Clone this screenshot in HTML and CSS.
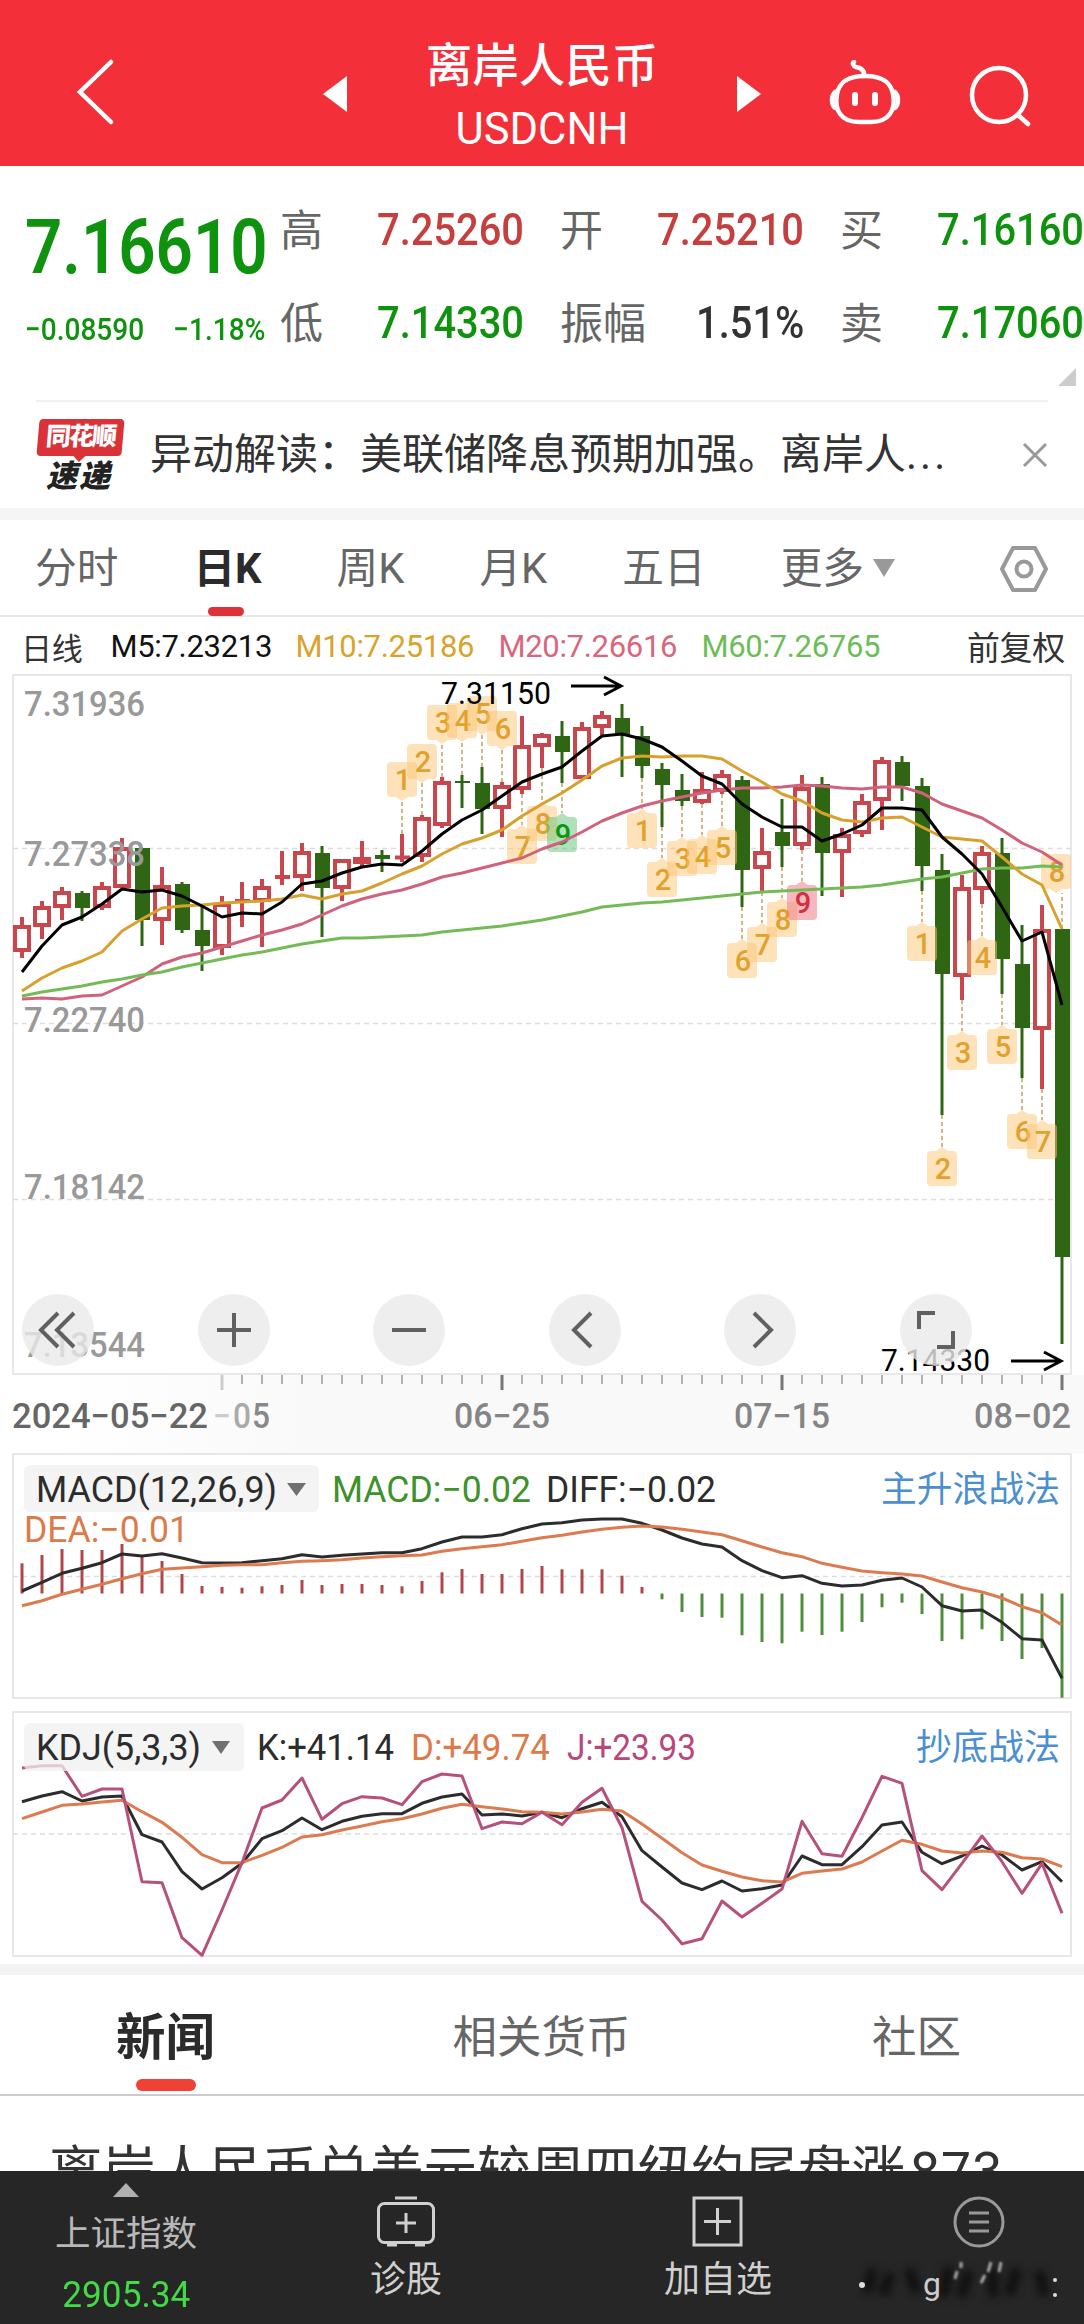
FILE: index.html
```html
<!DOCTYPE html>
<html lang="zh-CN">
<head>
  <meta charset="UTF-8">
  <meta name="viewport" content="width=device-width, initial-scale=1">
  <title>离岸人民币 USDCNH</title>
  <link rel="stylesheet" href="styles.css">
</head>
<body>
  <header class="topbar">
    <svg class="icon-back" width="44" height="70" viewBox="0 0 44 70"><path d="M38 5 L7 35 L38 65"/></svg>
    <svg class="icon-prev" width="24" height="36" viewBox="0 0 24 36"><path d="M24 0 V36 L0 18 Z"/></svg>
    <div class="title">
      <h1>离岸人民币</h1>
      <div class="symbol">USDCNH</div>
    </div>
    <svg class="icon-next" width="24" height="36" viewBox="0 0 24 36"><path d="M0 0 V36 L24 18 Z"/></svg>
    <svg class="icon-robot" width="72" height="66" viewBox="0 0 72 66">
      <path d="M36 16 C56 16 62 24 64 34 C67 50 60 62 42 62 H30 C12 62 5 50 8 34 C10 24 16 16 36 16 Z"/>
      <path d="M35 16 C36 10 32 8 27 7 C24 6 23 3 25 2"/>
      <path d="M6 32 C2 36 2 44 6 48 M66 32 C70 36 70 44 66 48"/>
      <path class="eyes" d="M26 35 V43 M46 35 V43"/>
    </svg>
    <svg class="icon-search" width="64" height="64" viewBox="0 0 64 64"><circle cx="31" cy="31" r="27"/><path d="M50 51 L60 60"/></svg>
  </header>

  <section class="quote">
    <div class="price">
      <div class="last"><span>7.16610</span></div>
      <div class="change"><span>−0.08590</span><span>−1.18%</span></div>
    </div>
    <dl class="stats">
      <div><dt>高</dt><dd class="up">7.25260</dd></div>
      <div><dt>开</dt><dd class="up">7.25210</dd></div>
      <div><dt>买</dt><dd class="down">7.16160</dd></div>
      <div><dt>低</dt><dd class="down">7.14330</dd></div>
      <div><dt>振幅</dt><dd>1.51%</dd></div>
      <div><dt>卖</dt><dd class="down">7.17060</dd></div>
    </dl>
    <i class="corner"></i>
  </section>

  <section class="notice">
    <div class="brand"><b>同花顺</b><em>速递</em></div>
    <p>异动解读：美联储降息预期加强。离岸人<span>...</span></p>
    <svg width="26" height="26" viewBox="0 0 26 26"><path d="M2 2 L24 24 M24 2 L2 24"/></svg>
  </section>

  <nav class="periods">
    <a>分时</a>
    <a class="active">日K</a>
    <a>周K</a>
    <a>月K</a>
    <a>五日</a>
    <a class="more">更多</a>
    <svg width="50" height="48" viewBox="0 0 50 48"><path d="M14 3 H36 L47 24 L36 45 H14 L3 24 Z"/><circle cx="25" cy="24" r="7.5"/></svg>
  </nav>

  <div class="legend">
    <span class="cn">日线</span>
    <span class="m5">M5:7.23213</span>
    <span class="m10">M10:7.25186</span>
    <span class="m20">M20:7.26616</span>
    <span class="m60">M60:7.26765</span>
    <span class="cn adjust">前复权</span>
  </div>

  <div class="chart">
    <svg id="chart" width="1084" height="1290" viewBox="0 674 1084 1290"></svg>
    <div class="tools">
      <button><svg viewBox="0 0 72 72"><path d="M36 19 L19 36 L36 53 M52 19 L35 36 L52 53"/></svg></button>
      <button><svg viewBox="0 0 72 72"><path d="M19 36 H53 M36 19 V53"/></svg></button>
      <button><svg viewBox="0 0 72 72"><path d="M19 36 H53"/></svg></button>
      <button><svg viewBox="0 0 72 72"><path d="M42 19 L25 36 L42 53"/></svg></button>
      <button><svg viewBox="0 0 72 72"><path d="M30 19 L47 36 L30 53"/></svg></button>
      <button><svg viewBox="0 0 72 72"><path d="M19 35 V19 H35 M53 37 V53 H37"/></svg></button>
    </div>
  </div>

  <nav class="sections">
    <a class="active">新闻</a>
    <a>相关货币</a>
    <a>社区</a>
  </nav>
  <article class="news">离岸人民币兑美元较周四纽约尾盘涨<span>873</span></article>

  <footer class="bottombar">
    <div class="item index">
      <svg width="26" height="14" viewBox="0 0 26 14"><path d="M13 0 L26 14 H0 Z"/></svg>
      <span>上证指数</span>
      <strong>2905.34</strong>
    </div>
    <div class="item">
      <svg width="60" height="52" viewBox="0 0 60 52"><rect x="2.5" y="7.5" width="55" height="39" rx="6"/><path d="M19 2 H41 M30 17 V37 M20 27 H40 M11 49 H21 M39 49 H49"/></svg>
      <span>诊股</span>
    </div>
    <div class="item add">
      <svg width="52" height="52" viewBox="0 0 52 52"><rect x="2" y="2" width="47" height="47"/><path d="M25.500 12 V39 M12 25.500 H39"/></svg>
      <span>加自选</span>
    </div>
    <div class="item menu">
      <svg width="54" height="52" viewBox="0 0 54 52"><circle cx="27" cy="26" r="24"/><path d="M17 17 H37 M17 26 H37 M17 35 H37"/></svg>
      <svg class="smudge" width="204" height="54" viewBox="0 0 204 54">
        <path class="dark" d="M16 10 L10 34 M34 14 L26 36 M52 10 L60 34 M92 8 L86 38 M112 12 L104 38 M136 10 V38 M160 10 L152 36 M182 12 L188 36"/>
        <path class="light" d="M104 3 V9 M134 3 L131 13 M144 3 L142 13 M100 12 L98 20 M128 16 L124 24"/>
        <circle cx="5" cy="26" r="3"/><circle cx="198" cy="21" r="2"/><circle cx="198" cy="36" r="2"/>
        <text x="66" y="36">g</text>
      </svg>
    </div>
  </footer>

  <script src="chart.js"></script>
</body>
</html>
```
FILE: styles.css
```css
* {
  box-sizing: border-box;
}
body {
  margin: 0;
  width: 1084px;
  height: 2324px;
  overflow: hidden;
  background: #fff;
  color: #333;
  font-family: Roboto, "Noto Sans CJK SC", sans-serif;
}
svg {
  display: block;
  fill: none;
  flex: none;
}

/* top bar */
.topbar {
  display: flex;
  height: 166px;
  background: #f3303a;
  color: #fff;
}
.topbar svg {
  stroke: #fff;
  stroke-width: 4.500;
  stroke-linecap: round;
}
.icon-back {
  margin: 57px 0 0 73px;
}
.topbar .icon-prev,
.topbar .icon-next {
  margin: 76px 0 0 206px;
  fill: #fff;
  stroke: none;
}
.topbar .icon-next {
  margin-left: 0;
}
.title {
  width: 390px;
  padding-top: 38px;
  text-align: center;
}
.title h1 {
  margin: 0;
  font-size: 46.500px;
  font-weight: 500;
  line-height: 56px;
}
.symbol {
  font-size: 43.500px;
  line-height: 72px;
}
.icon-robot {
  margin: 60px 0 0 68px;
}
.topbar .eyes {
  stroke-width: 6;
}
.icon-search {
  margin: 64px 0 0 67px;
}

/* quote */
.quote {
  position: relative;
  display: flex;
  height: 234px;
}
.price {
  width: 280px;
  padding: 46px 0 0 25px;
  color: #0f930f;
}
.last {
  height: 70px;
  font-size: 76px;
  font-weight: 600;
  line-height: 70px;
}
.last span {
  display: inline-block;
  transform: scaleX(.86);
  transform-origin: left;
}
.change {
  display: flex;
  justify-content: space-between;
  width: 270px;
  margin-top: 28px;
  font-size: 31.500px;
  font-weight: 500;
  line-height: 40px;
  transform: scaleX(.89);
  transform-origin: left;
}
.stats {
  display: grid;
  grid-template-columns: 280px 280px 280px;
  grid-auto-rows: 93px;
  flex: none;
  margin: 14px 0 0;
}
.stats div {
  display: flex;
  align-items: center;
  justify-content: space-between;
  width: 244px;
}
.stats dt {
  color: #666;
  font-size: 43px;
}
.stats dd {
  margin: 0;
  padding-top: 6px;
  font-size: 45px;
  font-weight: 500;
  transform: scaleX(.885);
  transform-origin: right;
}
.stats .up {
  color: #c63f3f;
}
.stats .down {
  color: #0f930f;
}
.corner {
  position: absolute;
  right: 8px;
  bottom: 14px;
  border: 9px solid transparent;
  border-right-color: #ccc;
  border-bottom-color: #ccc;
}

/* notice */
.notice {
  display: flex;
  align-items: center;
  height: 108px;
  margin: 0 36px;
  border-top: 2px solid #f0f0f0;
}
.brand {
  width: 114px;
  flex: none;
  line-height: 1;
}
.brand b {
  position: relative;
  display: block;
  width: 85px;
  height: 37px;
  margin-left: 2px;
  border-radius: 4px;
  background: #d93239;
  color: #fff;
  font-size: 25px;
  font-weight: 900;
  line-height: 36px;
  text-align: center;
  letter-spacing: -2px;
  transform: skewX(-5deg);
}
.brand b::after {
  content: "";
  position: absolute;
  left: 36px;
  top: 36px;
  border: 7px solid transparent;
  border-top-color: #d93239;
}
.brand em {
  display: block;
  margin: 5px 0 0 10px;
  color: #222;
  font-size: 31px;
  font-weight: 900;
  letter-spacing: 2px;
}
.notice p {
  width: 874px;
  margin: 0;
  font-size: 42px;
  line-height: 60px;
  white-space: nowrap;
}
.notice p span {
  letter-spacing: 3px;
}
.notice svg {
  margin-left: 1px;
  stroke: #999;
  stroke-width: 3;
}

/* period tabs */
.periods {
  display: flex;
  align-items: center;
  gap: 75px;
  height: 109px;
  padding: 2px 35px 0;
  border-top: 12px solid #f5f5f5;
  border-bottom: 2px solid #e8e8e8;
  color: #666;
  font-size: 41.700px;
}
.periods a {
  position: relative;
  line-height: 60px;
}
.periods .active {
  color: #2b2b2b;
  font-weight: 700;
}
.periods .active::after {
  content: "";
  position: absolute;
  left: 15px;
  bottom: -17px;
  width: 36px;
  height: 9px;
  border-radius: 5px;
  background: #dd3338;
}
.periods .more::after {
  content: "";
  position: absolute;
  right: -31px;
  top: 20px;
  border: solid transparent;
  border-width: 18px 11px 0;
  border-top-color: #999;
}
.periods svg {
  margin-left: auto;
  stroke: #999;
  stroke-width: 4;
  stroke-linejoin: round;
}

/* moving average legend */
.legend {
  display: flex;
  align-items: center;
  height: 58px;
  margin-bottom: -1px;
  padding: 0 19px 0 21px;
  font-size: 31px;
  letter-spacing: -.3px;
  white-space: nowrap;
}
.legend .m5 {
  width: 185px;
  margin-left: 28px;
  color: #111;
}
.legend .m10 {
  width: 203px;
  color: #d9a32c;
}
.legend .m20 {
  width: 203px;
  color: #d9667d;
}
.legend .m60 {
  color: #6cbd58;
}
.legend .adjust {
  margin-left: auto;
  font-size: 33px;
}

/* chart */
.chart {
  position: relative;
  height: 1290px;
}
.chart text {
  stroke: none;
}
.frame {
  fill: none;
  stroke: #e8e8e8;
  stroke-width: 2;
}
.grid {
  stroke: #ddd;
  stroke-width: 1.5;
  stroke-dasharray: 5 4;
}
.tick {
  stroke: #999;
  stroke-width: 1.5;
}
.tick-main {
  stroke: #777;
  stroke-width: 3;
}
.tick-light {
  stroke: #ccc;
  stroke-width: 3;
}
.candle-up {
  stroke: #c9474c;
  stroke-width: 4;
  fill: none;
}
.candle-up rect {
  fill: #fff;
}
.candle-down {
  stroke: #2f6614;
  stroke-width: 3;
  fill: #2f6614;
}
.line {
  fill: none;
  stroke-width: 3;
  stroke-linejoin: round;
}
.badge path {
  fill: #fbc676;
  fill-opacity: .5;
}
.badge text {
  fill: #e2a02c;
  font-size: 29px;
  font-weight: 500;
  text-anchor: middle;
}
.badge line {
  stroke: #d0b88a;
  stroke-width: 2;
  stroke-dasharray: 4 3;
}
.badge-green path {
  fill: #62c476;
}
.badge-green text {
  fill: #0d970d;
}
.badge-red path {
  fill: #ef707d;
}
.badge-red text {
  fill: #d02f3e;
}
.arrow {
  fill: none;
  stroke: #000;
  stroke-width: 3;
}
.hist-up {
  stroke: #b0474b;
  stroke-width: 3;
}
.hist-down {
  stroke: #4f8c3c;
  stroke-width: 3;
}
.chip {
  fill: #f0f0f0;
  fill-opacity: .75;
}
.caret {
  fill: #707070;
}
.tools {
  position: absolute;
  left: 22px;
  top: 620px;
  display: flex;
  gap: 103.600px;
}
.tools button {
  width: 72px;
  height: 72px;
  padding: 0;
  border: 0;
  border-radius: 50%;
  background: rgba(234, 234, 234, .8);
}
.tools svg {
  stroke: #606060;
  stroke-width: 4;
}

/* news tabs */
.sections {
  display: flex;
  justify-content: space-between;
  align-items: center;
  height: 132px;
  padding: 0 123px 3px 116px;
  border-top: 11px solid #f4f4f4;
  border-bottom: 2px solid #ccc;
  color: #666;
  font-size: 44.500px;
}
.sections a:nth-child(2) {
  margin-right: 4px;
}
.sections .active {
  position: relative;
  color: #2b2b2b;
  font-size: 49.500px;
  font-weight: 700;
}
.sections .active::after {
  content: "";
  position: absolute;
  left: 20px;
  bottom: -22px;
  width: 60px;
  height: 12px;
  border-radius: 6px;
  background: #ef4136;
}
.news {
  height: 75px;
  padding: 38px 0 0 49px;
  overflow: hidden;
  font-size: 53.500px;
  line-height: 76px;
  white-space: nowrap;
}
.news span {
  margin-left: 5px;
  letter-spacing: 1px;
}

/* bottom bar */
.bottombar {
  display: flex;
  height: 153px;
  background: #262626;
  color: #d0d0d0;
  font-size: 36px;
}
.item {
  position: relative;
  display: flex;
  flex-direction: column;
  align-items: center;
  width: 156px;
  padding-top: 25px;
  margin-left: 76px;
}
.item svg {
  stroke: #d0d0d0;
  stroke-width: 3;
}
.item span {
  margin-top: 7px;
  line-height: 50px;
  white-space: nowrap;
}
.index {
  width: 252px;
  margin-left: 0;
  padding-top: 12px;
}
.index svg {
  stroke: none;
  fill: #b0b0b0;
}
.index span {
  margin-top: 12px;
  color: #b8b8b8;
  font-size: 35.500px;
}
.index strong {
  margin-top: 14px;
  color: #41dc45;
  font-size: 37px;
  font-weight: 400;
  line-height: 44px;
  transform: scaleX(.95);
}
.add {
  margin-left: 156px;
}
.menu {
  margin-left: 105px;
}
.menu svg {
  stroke: #999;
}
.menu .smudge {
  position: absolute;
  left: -44px;
  top: 88px;
  stroke: none;
  fill: #ddd;
}
.smudge .dark {
  fill: none;
  stroke: #0c0c0c;
  stroke-width: 9;
  filter: blur(4px);
}
.smudge .light {
  fill: none;
  stroke: #aaa;
  stroke-width: 3;
  filter: blur(1px);
}
.smudge text {
  fill: #ccc;
  font-size: 32px;
}
```
FILE: chart.js
```js
const svg = document.getElementById('chart');
const X0 = 22;
const STEP = 20;
const x = i => X0 + i * STEP;
let out = '';

// high, body top, body bottom, low, up
const candles = [
  [917,925,952,958,1],[901,906,927,939,1],[887,891,908,920,1],[891,893,908,921,0],[882,886,908,910,1],
  [838,847,888,888,1],[848,848,920,946,0],[867,885,921,945,1],[882,884,930,933,0],[905,930,946,971,0],
  [896,903,948,955,1],[882,899,903,927,1],[879,886,902,947,1],[851,876,878,885,1],[843,851,878,891,1],
  [846,853,888,937,0],[859,859,889,901,1],[841,857,864,867,1],[850,855,859,872,0],[834,857,858,862,1],
  [815,817,857,862,1],[777,781,826,828,1],[775,781,783,808,0],[767,783,809,834,0],[782,785,809,837,1],
  [716,745,790,794,1],[733,734,747,768,1],[721,736,752,783,0],[722,727,779,779,1],[711,715,728,735,1],
  [704,718,735,777,0],[726,736,766,778,0],[763,769,785,827,0],[774,790,801,806,0],[772,789,803,804,1],
  [770,774,792,794,1],[776,780,870,907,0],[828,851,869,892,1],[799,832,846,867,0],[775,787,846,850,1],
  [777,784,853,896,0],[828,834,853,897,1],[794,801,834,837,1],[757,760,801,830,1],[756,762,786,801,0],
  [778,786,866,891,0],[854,870,974,1115,0],[875,887,977,1000,1],[846,852,890,904,1],[838,853,959,994,0],
  [925,964,1028,1078,0],[905,929,1030,1089,1],[929,929,1257,1344,0]
];
const ma5 = [972,946,925,917,904,889,892,890,896,906,917,913,914,902,884,881,873,867,864,865,851,834,820,810,796,782,774,767,751,736,734,739,747,761,776,784,804,817,827,827,841,834,825,808,808,810,837,854,874,907,941,932,1005];
const ma10 = [991,978,968,961,952,931,919,908,906,905,903,902,901,899,895,899,894,891,883,874,866,854,844,838,830,816,804,793,780,766,758,756,757,756,756,759,771,782,794,801,813,820,822,818,817,827,837,839,841,857,874,885,929];
const ma20 = [999,998,999,996,995,986,977,964,957,953,947,941,935,930,924,915,906,899,894,890,884,877,873,868,863,858,849,842,832,821,813,806,801,797,793,790,788,788,787,785,786,788,789,787,787,793,804,811,818,830,843,852,865];
const ma60 = [996,992,989,986,982,979,975,972,967,963,959,955,952,948,944,941,938,938,937,936,935,932,930,928,926,923,920,916,912,907,905,903,902,900,898,896,894,892,891,890,889,888,887,885,882,879,877,873,869,868,868,866,867];

// indicator panes are stored as offsets in thirds of a pixel from the pane origin
const hist = [340,315,297,300,300,282,320,333,372,408,411,413,409,405,390,405,402,402,405,409,393,367,357,372,372,357,348,358,358,358,377,411,448,486,501,503,556,576,580,545,555,545,516,472,458,492,573,568,538,573,627,594,743];
const diff = [423,397,370,355,338,312,318,311,324,338,339,338,332,326,314,321,316,312,308,308,296,276,261,261,254,236,222,218,210,207,207,220,240,264,282,291,332,362,383,377,400,408,405,391,384,411,467,483,480,517,566,570,685];
const dea = [467,452,433,418,403,386,371,358,354,350,346,344,344,338,334,332,329,324,320,317,315,304,296,290,284,274,263,256,246,238,232,228,231,238,246,254,272,291,308,320,340,352,363,368,372,378,396,413,426,444,470,488,525];
const k = [305,288,275,303,291,288,404,426,515,567,533,490,416,392,354,389,364,349,341,341,310,291,282,345,342,348,337,353,326,307,350,452,501,549,569,543,573,566,555,468,494,494,440,375,366,457,491,468,438,465,510,485,545];
const d = [356,336,316,312,306,301,335,367,412,464,488,488,466,442,411,404,390,378,365,356,342,325,313,320,327,335,337,342,336,328,333,372,415,458,495,514,531,542,546,520,513,507,486,453,421,433,453,459,453,457,473,477,500];
const j = [204,197,197,289,267,267,545,548,713,766,630,488,324,300,234,358,311,290,294,314,245,222,228,386,366,371,337,374,307,265,383,604,660,731,716,603,651,610,567,364,461,469,353,229,250,512,569,490,408,485,580,490,640];

// candle index, count, tip y, above candle
const badges = [
  [19,1,801,1],[20,2,783,1],[21,3,744,1],[22,4,742,1],[23,5,735,1],[24,6,750,1],
  [25,7,825,0],[26,8,802,0],[27,9,813,0,'badge-green'],
  [31,1,809,0],[32,2,858,0],[33,3,837,0],[34,4,835,0],[35,5,826,0],[36,6,939,0],[37,7,923,0],[38,8,898,0],[39,9,881,0,'badge-red'],
  [45,1,922,0],[46,2,1147,0],[47,3,1031,0],[48,4,936,0],[49,5,1025,0],[50,6,1110,0],[51,7,1120,0],[52,8,893,1]
];

function hline(y) {
  out += `<line class="grid" x1="13" x2="1071" y1="${y}" y2="${y}"/>`;
}
function line(data, color, base) {
  const pts = data.map((v, i) => x(i) + ',' + (base ? (base + v / 3).toFixed(1) : v)).join(' ');
  out += `<polyline class="line" stroke="${color}" points="${pts}"/>`;
}
function text(str, left, y, width, size, color, weight) {
  out += `<text x="${left}" y="${y}" textLength="${width}" lengthAdjust="spacingAndGlyphs" font-size="${size}" fill="${color}" font-weight="${weight || 400}">${str}</text>`;
}

// price pane
out += '<defs><linearGradient id="fade"><stop offset="0" stop-color="#fff"/><stop offset=".25" stop-color="#f9f9f9"/></linearGradient></defs>';
out += '<rect fill="url(#fade)" x="60" y="1375" width="1024" height="79"/>';
out += '<rect class="frame" x="13" y="675" width="1058" height="699"/>';
[848.5, 1023.5, 1199.5].forEach(hline);

candles.forEach(([high, top, bottom, low, up], i) => {
  const c = x(i);
  if (up) {
    const h = Math.max(bottom - top - 4, 0);
    out += `<g class="candle-up"><path d="M${c} ${high} V${top} M${c} ${bottom} V${low}"/>`;
    out += h ? `<rect x="${c - 7}" y="${top + 2}" width="14" height="${h}"/></g>` : `<path d="M${c - 7} ${(top + bottom) / 2} h15"/></g>`;
  } else {
    out += `<g class="candle-down"><path d="M${c} ${high} V${low}"/><rect stroke="none" x="${c - 7}" y="${top}" width="15" height="${bottom - top}"/></g>`;
  }
});

badges.forEach(([i, n, tip, above, cls]) => {
  const c = i === 52 ? 1056 : x(i);
  const s = above ? -1 : 1;
  const from = above ? candles[i][0] : candles[i][3];
  out += `<g class="badge ${cls || ''}"><line x1="${x(i)}" x2="${x(i)}" y1="${from}" y2="${tip}"/>`;
  out += `<path d="M${c} ${tip} l6 ${4 * s} h5 q4 0 4 ${4 * s} v${27 * s} q0 ${4 * s} -4 ${4 * s} h-22 q-4 0 -4 ${-4 * s} v${-27 * s} q0 ${-4 * s} 4 ${-4 * s} h5 z"/>`;
  out += `<text x="${c + 1}" y="${tip + (above ? -11 : 32)}">${n}</text></g>`;
});

line(ma20, '#d0627c');
line(ma60, '#74bb58');
line(ma10, '#d8a12d');
line(ma5, '#000');

text('7.31936', 24, 716, 121, 35, '#999', 500);
text('7.27338', 24, 866, 121, 35, '#999', 500);
text('7.22740', 24, 1032, 121, 35, '#999', 500);
text('7.18142', 24, 1199, 121, 35, '#999', 500);
text('7.13544', 24, 1357, 121, 35, '#999', 500);
text('7.31150', 441, 704, 110, 31, '#000');
text('7.14330', 881, 1371, 109, 31, '#000');
out += '<path class="arrow" d="M571 686 H621 M604 677 L621 686 L604 695"/>';
out += '<path class="arrow" d="M1011 1361 H1061 M1044 1352 L1061 1361 L1044 1370"/>';

// time axis
for (let t = 222; t <= 1062; t += STEP) {
  const main = (t - 222) % 280 === 0;
  const cls = t === 222 ? 'tick-light' : main ? 'tick-main' : 'tick';
  out += `<line class="${cls}" x1="${t}" x2="${t}" y1="1375" y2="${main ? 1390 : 1384}"/>`;
}
text('2024−05−22', 12, 1428, 196, 35, '#666', 500);
text('−', 213, 1428, 18, 35, '#ccc', 500);
text('0', 233, 1428, 18, 35, '#aaa', 500);
text('5', 252, 1428, 18, 35, '#888', 500);
text('06−25', 454, 1428, 96, 35, '#858585', 500);
text('07−15', 734, 1428, 96, 35, '#858585', 500);
text('08−02', 974, 1428, 97, 35, '#858585', 500);

// MACD
out += '<rect class="frame" x="13" y="1454" width="1058" height="244"/>';
hline(1576.5);
hist.forEach((v, i) => {
  out += `<line class="${v < 430 ? 'hist-up' : 'hist-down'}" x1="${x(i)}" x2="${x(i)}" y1="1593.5" y2="${(1450 + v / 3).toFixed(1)}"/>`;
});
line(diff, '#2c2c2c', 1450);
line(dea, '#dc7a50', 1450);
out += '<rect class="chip" x="24" y="1465" width="295" height="47" rx="6"/><path class="caret" d="M287 1483 h19 l-9.500 13 z"/>';
text('MACD(12,26,9)', 36, 1502, 241, 36, '#2c2c2c');
text('MACD:−0.02', 332, 1502, 199, 36, '#3d922b');
text('DIFF:−0.02', 546, 1502, 170, 36, '#2c2c2c');
text('DEA:−0.01', 24, 1542, 165, 36, '#dd7a4a');
text('主升浪战法', 881, 1502, 179, 36, '#4c8fd0');

// KDJ
out += '<rect class="frame" x="13" y="1712" width="1058" height="244"/>';
hline(1834);
line(k, '#2c2c2c', 1700);
line(d, '#dc7a50', 1700);
line(j, '#b6517b', 1700);
out += '<rect class="chip" x="24" y="1723" width="220" height="48" rx="6"/><path class="caret" d="M212 1741 h18 l-9 13 z"/>';
text('KDJ(5,3,3)', 36, 1760, 165, 36, '#2c2c2c');
text('K:+41.14', 257, 1760, 137, 36, '#2c2c2c');
text('D:+49.74', 411, 1760, 139, 36, '#dd7a4a');
text('J:+23.93', 567, 1760, 129, 36, '#b8487a');
text('抄底战法', 916, 1760, 144, 36, '#4c8fd0');

svg.innerHTML = out;
```
